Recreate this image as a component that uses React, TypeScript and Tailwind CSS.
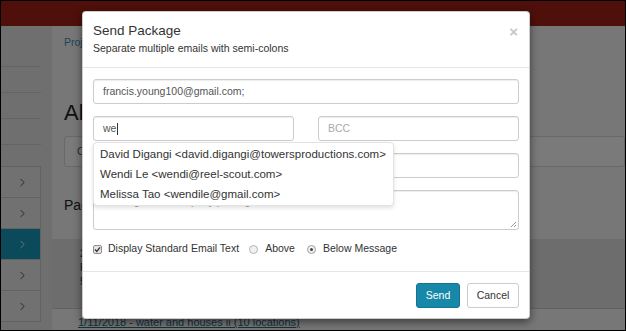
import { ChevronRight } from "lucide-react";

const font = { fontFamily: '"Liberation Sans", Arial, sans-serif' };

const suggestions = [
  "David Digangi <david.digangi@towersproductions.com>",
  "Wendi Le <wendi@reel-scout.com>",
  "Melissa Tao <wendile@gmail.com>",
];

const Sidebar = () => {
  return (
    <div className="w-[51px] shrink-0 bg-[#dedede]">
      <div className="w-[40px]">
        <div className="h-[40px]" />
        <div className="h-[26px] border-t border-[#c9c9c9]" />
        <div className="h-[26px] border-t border-[#c9c9c9]" />
        <div className="h-[26px] border-t border-[#c9c9c9]" />
        <div className="h-[22px] border-t border-[#c9c9c9]" />
        <div className="border border-l-0 border-[#c4c4c4] bg-[#e2e2e2]">
          {[0, 1, 2, 3, 4].map((i) => (
            <div
              key={i}
              className={
                i === 2
                  ? "h-[31px] flex items-center justify-end pr-[11px] bg-[#1694b4] text-white border-t border-[#c4c4c4]"
                  : i === 0
                  ? "h-[30px] flex items-center justify-end pr-[11px] text-[#333]"
                  : "h-[31px] flex items-center justify-end pr-[11px] text-[#333] border-t border-[#c4c4c4]"
              }
            >
              <ChevronRight size={13} strokeWidth={1.5} />
            </div>
          ))}
        </div>
      </div>
    </div>
  );
};

const PageContent = () => {
  return (
    <div className="flex-1 bg-[#eeeeee] pl-[12px] pt-[9px]">
      <div className="text-[10.5px] leading-[15px] text-[#3b8bb3]">Projects / Admin</div>
      <div className="mt-[50px] text-[22px] leading-[26px] text-[#222]">All Packages</div>
      <div className="mt-[10px] h-[31px] border border-[#d2d2d2] bg-[#f5f5f5] rounded-[3px] flex items-center px-[12px] text-[11px] text-[#555]">
        Create Package
      </div>
      <div className="mt-[29px] text-[14px] leading-[18px] text-[#222]">Packages</div>
      <div className="mt-[25px] -ml-[12px] h-[70px] bg-[#dadada] border-b border-[#c4c4c4] pl-[28px] pt-[8px] text-[10px] leading-[14px] text-[#333]">
        <div>2/14/2018</div>
        <div>Files</div>
        <div>5 locations</div>
      </div>
      <div className="mt-[6px] pl-[14px] text-[11px] leading-[14px] text-[#25657f] underline">
        1/11/2018 - water and houses ii (10 locations)
      </div>
    </div>
  );
};

const Field = ({ children, className = "" }: { children?: React.ReactNode; className?: string }) => (
  <div
    className={
      "h-[25px] border border-[#cccccc] rounded-[3px] px-[9px] flex items-center text-[10.5px] text-[#555] bg-white shadow-[inset_0_1px_1px_rgba(0,0,0,0.075)] " +
      className
    }
  >
    {children}
  </div>
);

const SendPackageModal = () => {
  return (
    <div className="absolute left-[81px] top-[10px] w-[448px] bg-white rounded-[4px] shadow-[0_3px_9px_rgba(0,0,0,0.5)] border border-[rgba(0,0,0,0.2)]">
      <div className="flex justify-between pl-[10px] pr-[11px] pt-[11px] pb-[11px] border-b border-[#e5e5e5]">
        <div>
          <div className="text-[13.5px] leading-[16px] text-[#333]">Send Package</div>
          <div className="mt-[2px] text-[10.5px] leading-[15px] text-[#333]">
            Separate multiple emails with semi-colons
          </div>
        </div>
        <div className="text-[15px] leading-[15px] font-bold text-[#c6c6c6] mt-[1px]">×</div>
      </div>

      <div className="px-[10px] pt-[11px] pb-[15px] flex flex-col gap-[12px]">
        <Field>francis.young100@gmail.com;</Field>

        <div className="grid grid-cols-2 gap-[24px]">
          <div className="relative">
            <Field className="border-[#66afe9] shadow-[0_0_4px_rgba(102,175,233,0.6)]">
              we<span className="inline-block w-[1px] h-[12px] bg-[#333] ml-[1px]" />
            </Field>
            <div className="absolute left-0 top-full mt-[1px] w-[301px] z-10 bg-white border border-[#e3e3e3] rounded-[4px] shadow-[0_2px_4px_rgba(0,0,0,0.12)] pt-[2px]">
              {suggestions.map((s) => (
                <div key={s} className="h-[20px] px-[6px] flex items-center text-[11.5px] text-[#333] whitespace-nowrap">
                  {s}
                </div>
              ))}
            </div>
          </div>
          <Field className="text-[#aaaaaa]">BCC</Field>
        </div>

        <Field>Package link to share</Field>

        <div className="relative h-[40px] border border-[#cccccc] rounded-[3px] px-[9px] pt-[3px] text-[10.5px] leading-[15px] text-[#999] shadow-[inset_0_1px_1px_rgba(0,0,0,0.075)]">
          Message to accompany package
          <svg className="absolute right-[1px] bottom-[1px]" width="7" height="7" viewBox="0 0 7 7">
            <path d="M6 1 L1 6 M6 4 L4 6" stroke="#999" strokeWidth="1" />
          </svg>
        </div>

        <div className="h-[14px] flex items-center text-[10.5px] text-[#333]">
          <div className="w-[9px] h-[9px] rounded-[2px] border border-[#8f8f8f] bg-[#e6e6e6] flex items-center justify-center">
            <svg width="7" height="7" viewBox="0 0 7 7">
              <path d="M1 3.6 L2.8 5.4 L6 1.4" stroke="#333" strokeWidth="1.4" fill="none" />
            </svg>
          </div>
          <span className="ml-[6px]">Display Standard Email Text</span>
          <div className="ml-[10px] w-[9px] h-[9px] rounded-full border border-[#b5b5b5] bg-[#f0f0f0]" />
          <span className="ml-[7px]">Above</span>
          <div className="ml-[12px] w-[9px] h-[9px] rounded-full border border-[#a0a0a0] bg-[#f0f0f0] flex items-center justify-center">
            <div className="w-[3px] h-[3px] rounded-full bg-[#444]" />
          </div>
          <span className="ml-[7px]">Below Message</span>
        </div>
      </div>

      <div className="border-t border-[#e5e5e5] px-[10px] pt-[11px] pb-[10px] flex justify-end gap-[7px]">
        <button className="w-[44px] h-[25px] rounded-[3px] bg-[#1788a8] border border-[#147592] text-white text-[10.5px]">
          Send
        </button>
        <button className="w-[52px] h-[25px] rounded-[3px] bg-white border border-[#cccccc] text-[#333] text-[10.5px]">
          Cancel
        </button>
      </div>
    </div>
  );
};

const App = () => {
  return (
    <div className="relative w-[626px] h-[331px] overflow-hidden border border-black bg-[#eeeeee]" style={font}>
      <div className="flex flex-col h-full">
        <div className="h-[25px] shrink-0 bg-[#9e1f15]" />
        <div className="flex flex-1">
          <Sidebar />
          <PageContent />
        </div>
      </div>
      <div className="absolute inset-0 bg-black/50" />
      <SendPackageModal />
    </div>
  );
};

export default App;
